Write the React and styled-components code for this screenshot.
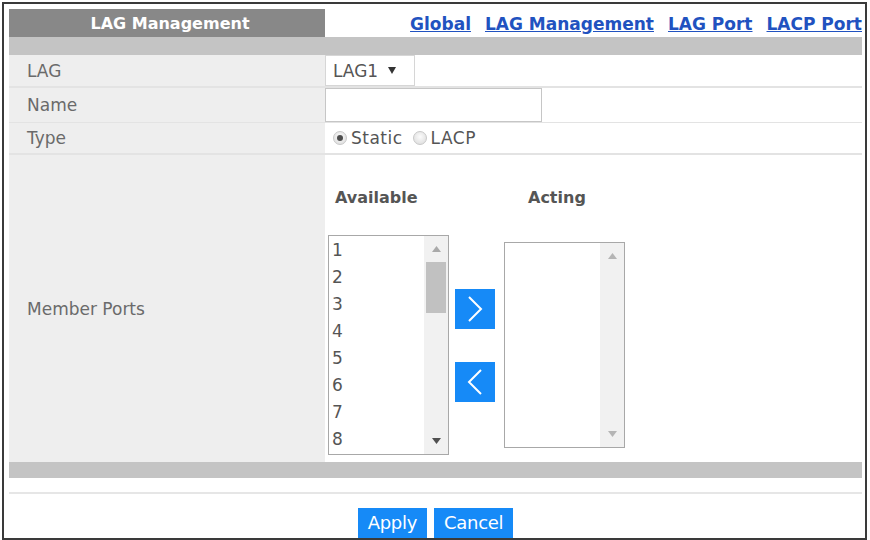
import React from 'react';
import styled, { createGlobalStyle } from 'styled-components';

const GlobalStyle = createGlobalStyle`
  html, body { margin: 0; padding: 0; background: #fff; }
  body { font-family: "DejaVu Sans", "Liberation Sans", sans-serif; }
  * { box-sizing: border-box; }
`;

const Frame = styled.div`
  margin: 2px 0 0 2px;
  width: 865px;
  height: 538px;
  border: 2px solid #3a3a3a;
  padding: 5px 3px 0 5px;
  overflow: hidden;
  display: flex;
  flex-direction: column;
`;

const TabBar = styled.div`
  display: flex;
  height: 28px;
  flex-shrink: 0;
`;

const Title = styled.div`
  width: 316px;
  background: #888888;
  color: #fff;
  font-weight: bold;
  font-size: 16px;
  display: flex;
  align-items: center;
  justify-content: center;
  padding-left: 6px;
`;

const Links = styled.nav`
  flex: 1;
  display: flex;
  align-items: center;
  justify-content: flex-end;
  gap: 14px;
  padding-top: 2px;
`;

const Link = styled.a`
  color: #2152c0;
  font-weight: bold;
  font-size: 17px;
  text-decoration: underline;
  white-space: nowrap;
  cursor: pointer;
`;

const GrayBar = styled.div`
  height: ${p => p.$h}px;
  background: #c4c4c4;
  flex-shrink: 0;
`;

const Row = styled.div`
  display: grid;
  grid-template-columns: 316px 1fr;
  height: ${p => p.$h}px;
  flex-shrink: 0;
  border-bottom: ${p => (p.$line ? '2px solid #e3e3e3' : 'none')};
`;

const Label = styled.div`
  background: #eeeeee;
  color: #6a6a6a;
  font-size: 17px;
  display: flex;
  align-items: center;
  padding-left: 18px;
`;

const Value = styled.div`
  background: #fff;
  display: flex;
  align-items: ${p => p.$align || 'center'};
  padding-left: ${p => p.$pad || 0}px;
  color: #555;
  font-size: 17px;
`;

const Select = styled.div`
  width: 90px;
  height: 31px;
  border: 1px solid #d6d6d6;
  display: flex;
  align-items: center;
  padding-left: 7px;
  gap: 10px;
  color: #555;
  font-size: 17px;
`;

const TextBox = styled.div`
  width: 217px;
  height: 34px;
  border: 1px solid #c6c6c6;
  background: #fff;
`;

const Radio = styled.span`
  width: 14px;
  height: 14px;
  border-radius: 50%;
  border: 1px solid #c8c8c8;
  background: radial-gradient(circle at 50% 40%, #fbfbfb, #d9d9d9);
  display: inline-flex;
  align-items: center;
  justify-content: center;
  margin-right: 4px;
  &::after {
    content: '';
    width: 6px;
    height: 6px;
    border-radius: 50%;
    background: ${p => (p.$on ? '#4d4d4d' : 'transparent')};
  }
`;

const RadioLabel = styled.span`
  margin-right: 10px;
  color: #555;
  letter-spacing: 0.5px;
`;

const Transfer = styled.div`
  display: grid;
  grid-template-columns: 121px 55px 121px;
  grid-template-rows: 20px 220px;
  row-gap: 28px;
  align-items: center;
  padding: 32px 0 0 3px;
`;

const Heading = styled.div`
  font-weight: bold;
  font-size: 16px;
  color: #555;
  padding-left: ${p => p.$pad}px;
`;

const ListBox = styled.div`
  width: 121px;
  height: ${p => p.$h}px;
  border: 1px solid #a8a8a8;
  background: #fff;
  display: flex;
`;

const Items = styled.div`
  flex: 1;
  padding: 1px 0 0 3px;
  font-size: 17px;
  line-height: 27px;
  color: #555;
  overflow: hidden;
`;

const ScrollBar = styled.div`
  width: 24px;
  background: #f1f1f1;
  display: flex;
  flex-direction: column;
`;

const ArrowBox = styled.div`
  height: 26px;
  display: flex;
  align-items: center;
  justify-content: center;
  flex-shrink: 0;
`;

const Track = styled.div`
  flex: 1;
  padding: 0 2px;
`;

const Thumb = styled.div`
  height: 51px;
  background: #c1c1c1;
`;

const MoveButtons = styled.div`
  display: flex;
  flex-direction: column;
  gap: 33px;
  padding-left: 6px;
`;

const MoveButton = styled.button`
  width: 40px;
  height: 40px;
  border: none;
  padding: 0;
  background: #168af7;
  display: flex;
  align-items: center;
  justify-content: center;
`;

const Divider = styled.div`
  height: 2px;
  background: #e6e6e6;
  margin-top: 14px;
  flex-shrink: 0;
`;

const ButtonRow = styled.div`
  display: flex;
  justify-content: center;
  gap: 7px;
  margin-top: 14px;
  flex-shrink: 0;
`;

const ActionButton = styled.button`
  height: 30px;
  border: none;
  padding: 0 10px;
  background: #168af7;
  color: #fff;
  font-family: "DejaVu Sans", "Liberation Sans", sans-serif;
  font-size: 18px;
  line-height: 30px;
  letter-spacing: -0.3px;
`;

const Tri = ({ up, color }) => (
  <svg width="9" height="6" viewBox="0 0 9 6">
    <polygon points={up ? '0,6 9,6 4.5,0' : '0,0 9,0 4.5,6'} fill={color} />
  </svg>
);

const Chevron = ({ left }) => (
  <svg width="16" height="26" viewBox="0 0 16 26">
    <polyline
      points={left ? '14,1 2,13 14,25' : '2,1 14,13 2,25'}
      fill="none"
      stroke="#fff"
      strokeWidth="2"
    />
  </svg>
);

export default function App() {
  const ports = [1, 2, 3, 4, 5, 6, 7, 8];
  return (
    <>
      <GlobalStyle />
      <Frame>
        <TabBar>
          <Title>LAG Management</Title>
          <Links>
            <Link>Global</Link>
            <Link>LAG Management</Link>
            <Link>LAG Port</Link>
            <Link>LACP Port</Link>
          </Links>
        </TabBar>
        <GrayBar $h={18} />
        <Row $h={33} $line>
          <Label>LAG</Label>
          <Value $align="flex-start">
            <Select>
              LAG1
              <svg width="8" height="7" viewBox="0 0 8 7">
                <polygon points="0,0 8,0 4,7" fill="#333" />
              </svg>
            </Select>
          </Value>
        </Row>
        <Row $h={35} $line>
          <Label>Name</Label>
          <Value $align="flex-start">
            <TextBox />
          </Value>
        </Row>
        <Row $h={32} $line>
          <Label>Type</Label>
          <Value $pad={8}>
            <Radio $on />
            <RadioLabel>Static</RadioLabel>
            <Radio />
            <RadioLabel>LACP</RadioLabel>
          </Value>
        </Row>
        <Row $h={307}>
          <Label>Member Ports</Label>
          <Value $align="flex-start">
            <Transfer>
              <Heading $pad={7}>Available</Heading>
              <div />
              <Heading $pad={24}>Acting</Heading>
              <ListBox $h={220}>
                <Items>
                  {ports.map(p => (
                    <div key={p}>{p}</div>
                  ))}
                </Items>
                <ScrollBar>
                  <ArrowBox>
                    <Tri up color="#a9a9a9" />
                  </ArrowBox>
                  <Track>
                    <Thumb />
                  </Track>
                  <ArrowBox>
                    <Tri color="#505050" />
                  </ArrowBox>
                </ScrollBar>
              </ListBox>
              <MoveButtons>
                <MoveButton>
                  <Chevron />
                </MoveButton>
                <MoveButton>
                  <Chevron left />
                </MoveButton>
              </MoveButtons>
              <ListBox $h={206}>
                <Items />
                <ScrollBar>
                  <ArrowBox>
                    <Tri up color="#b5b5b5" />
                  </ArrowBox>
                  <Track />
                  <ArrowBox>
                    <Tri color="#b5b5b5" />
                  </ArrowBox>
                </ScrollBar>
              </ListBox>
            </Transfer>
          </Value>
        </Row>
        <GrayBar $h={16} />
        <Divider />
        <ButtonRow>
          <ActionButton>Apply</ActionButton>
          <ActionButton>Cancel</ActionButton>
        </ButtonRow>
      </Frame>
    </>
  );
}
